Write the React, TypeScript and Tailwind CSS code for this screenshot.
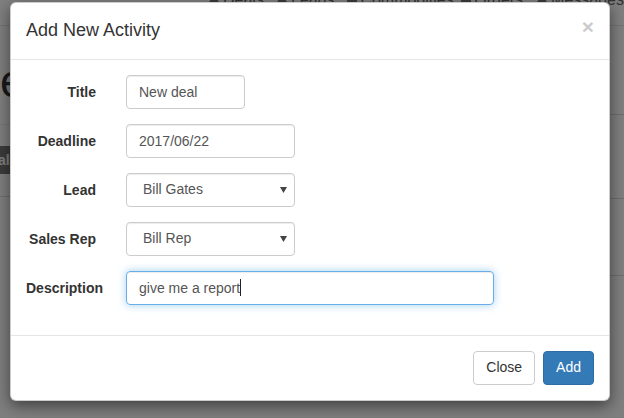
import React from "react";

const font = { fontFamily: '"Liberation Sans", Arial, Helvetica, sans-serif' };

function NavIcon({ kind }: { kind: "user" | "box" }) {
  if (kind === "box") {
    return <span className="inline-block w-[10px] h-[13px] bg-[#777] mr-[3px] align-baseline" />;
  }
  return (
    <svg width="12" height="14" viewBox="0 0 13 14" className="inline-block mr-[3px] align-baseline">
      <circle cx="6.5" cy="4" r="3.5" fill="#777" />
      <path d="M0 14 L3 8 L10 8 L13 14 Z" fill="#777" />
    </svg>
  );
}

function SelectBox({ value }: { value: string }) {
  return (
    <div className="flex items-center justify-between w-[169px] h-[34px] rounded-[4px] border border-[#ccc] bg-white pl-[16px] pr-[7px] text-[14px] text-[#555] shadow-[inset_0_1px_1px_rgba(0,0,0,0.075)]">
      <span>{value}</span>
      <svg width="7" height="6" viewBox="0 0 7 6">
        <path d="M0 0 L7 0 L3.5 6 Z" fill="#444" />
      </svg>
    </div>
  );
}

function Row({ label, children }: { label: string; children: React.ReactNode }) {
  return (
    <div className="flex items-center -mx-[15px] mb-[15px]">
      <div className="w-[100px] shrink-0 px-[15px]">
        <div className="w-[70px] text-right whitespace-nowrap text-[14px] font-bold text-[#333] leading-[20px]">{label}</div>
      </div>
      <div className="px-[15px]">{children}</div>
    </div>
  );
}

export default function App() {
  return (
    <div className="relative w-[624px] h-[418px] overflow-hidden bg-white" style={font}>
      {/* background page */}
      <div className="flex flex-col h-full">
        <div className="h-[26px] border-b border-[#e7e7e7] shrink-0">
          <div className="flex -mt-[10px] text-[16px] leading-[20px] text-[#666] pl-[208px] whitespace-nowrap">
            <span className="w-[80px]"><NavIcon kind="user" />Deals</span>
            <span className="w-[84px]"><NavIcon kind="user" />Leads</span>
            <span className="w-[134px]"><NavIcon kind="box" />Commodities</span>
            <span className="w-[88px]"><NavIcon kind="box" />Orders</span>
            <span><NavIcon kind="user" />Messages</span>
          </div>
        </div>
        <div className="flex flex-1">
          <div className="w-[60px] shrink-0 flex flex-col">
            <div className="h-[32px]" />
            <div className="text-[46px] leading-[46px] text-[#333] whitespace-nowrap">eals</div>
            <div className="h-[21px] border-b border-[#eee]" />
            <div className="h-[21px]" />
            <div className="h-[28px] bg-[#777] text-white text-[14px] font-bold leading-[28px] whitespace-nowrap -ml-[2px]">al</div>
            <div className="h-[23px] border-b border-[#ddd]" />
          </div>
          <div className="flex-1" />
          <div className="w-[20px] shrink-0 flex flex-col">
            <div className="h-[89px] border-b border-[#ddd]" />
            <div className="h-[84px] border-b border-[#ddd]" />
            <div className="h-[77px] border-b border-[#ddd]" />
          </div>
        </div>
      </div>

      {/* backdrop + modal */}
      <div className="absolute inset-0 bg-black/50">
        <div className="ml-[10px] mt-[2px] w-[600px] rounded-[6px] border border-black/20 bg-white shadow-[0_5px_15px_rgba(0,0,0,0.5)]">
          <div className="flex items-start justify-between p-[15px] border-b border-[#e5e5e5]">
            <h4 className="text-[18px] leading-[25.7px] text-[#333]">Add New Activity</h4>
            <span className="mt-[-2px] text-[21px] font-bold leading-none text-black opacity-20">×</span>
          </div>
          <div className="px-[15px] pt-[15px] pb-[15px]">
            <Row label="Title">
              <div className="w-[119px] h-[34px] rounded-[4px] border border-[#ccc] px-[12px] py-[6px] text-[14px] leading-[20px] text-[#555] shadow-[inset_0_1px_1px_rgba(0,0,0,0.075)]">New deal</div>
            </Row>
            <Row label="Deadline">
              <div className="w-[169px] h-[34px] rounded-[4px] border border-[#ccc] px-[12px] py-[6px] text-[14px] leading-[20px] text-[#555] shadow-[inset_0_1px_1px_rgba(0,0,0,0.075)]">2017/06/22</div>
            </Row>
            <Row label="Lead">
              <SelectBox value="Bill Gates" />
            </Row>
            <Row label="Sales Rep">
              <SelectBox value="Bill Rep" />
            </Row>
            <Row label="Description">
              <div className="flex items-center w-[368px] h-[34px] rounded-[4px] border border-[#66afe9] px-[12px] text-[14px] leading-[20px] text-[#555] shadow-[inset_0_1px_1px_rgba(0,0,0,0.075),0_0_8px_rgba(102,175,233,0.6)]">
                <span>give me a report</span>
                <span className="inline-block w-px h-[17px] bg-[#222]" />
              </div>
            </Row>
          </div>
          <div className="flex justify-end gap-[8px] p-[15px] border-t border-[#e5e5e5]">
            <button className="h-[34px] px-[12px] rounded-[4px] border border-[#ccc] bg-white text-[14px] text-[#333]">Close</button>
            <button className="h-[34px] px-[12px] rounded-[4px] border border-[#2e6da4] bg-[#337ab7] text-[14px] text-white">Add</button>
          </div>
        </div>
      </div>
    </div>
  );
}
